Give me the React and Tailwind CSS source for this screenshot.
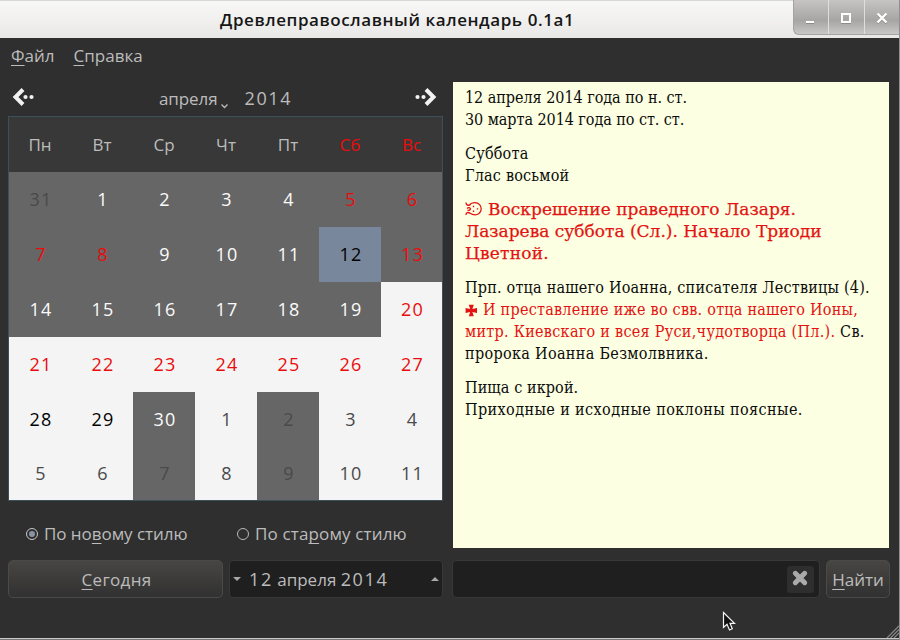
import React from 'react';

const MUTED = 'text-[#4a4a4a]';
const RED = 'text-[#ea0c0c]';
const WHITE = 'text-[#fbfbfb]';
const BLACK = 'text-black';
const G = 'bg-[#666666]';
const L = 'bg-[#f4f4f4]';
const SEL = 'bg-[#79879c]';

const dayNames = ['Пн', 'Вт', 'Ср', 'Чт', 'Пт', 'Сб', 'Вс'];

// [day, background, text colour]
const days = [
  [31, G, MUTED], [1, G, WHITE], [2, G, WHITE], [3, G, WHITE], [4, G, WHITE], [5, G, RED], [6, G, RED],
  [7, G, RED], [8, G, RED], [9, G, WHITE], [10, G, WHITE], [11, G, WHITE], [12, SEL, BLACK], [13, G, RED],
  [14, G, WHITE], [15, G, WHITE], [16, G, WHITE], [17, G, WHITE], [18, G, WHITE], [19, G, WHITE], [20, L, RED],
  [21, L, RED], [22, L, RED], [23, L, RED], [24, L, RED], [25, L, RED], [26, L, RED], [27, L, RED],
  [28, L, BLACK], [29, L, BLACK], [30, G, WHITE], [1, L, MUTED], [2, G, MUTED], [3, L, MUTED], [4, L, MUTED],
  [5, L, MUTED], [6, L, MUTED], [7, G, MUTED], [8, L, MUTED], [9, G, MUTED], [10, L, MUTED], [11, L, MUTED],
];

function Key({ children }) {
  return (
    <span className="underline decoration-1 underline-offset-[3px] [text-decoration-skip-ink:none]">{children}</span>
  );
}

function Num({ children }) {
  return <span className="text-[18px] tracking-[1.6px]">{children}</span>;
}

function TitleBar() {
  return (
    <header className="flex h-[38px] border-t border-[#d8d8d8] bg-linear-to-b from-[#f8f8f7] to-[#e9e8e7]">
      <div className="w-[793px] pl-[220px] text-[17px] leading-[37px] font-semibold tracking-[0.58px] text-[#161616]">
        Древлеправославный календарь 0.1a1
      </div>
      <div className="-mt-px flex h-[35px] w-[106px] rounded-bl-[6px] border-b border-l border-[#a3a3a3] bg-linear-to-b from-[#c6c5c4] via-[#a6a5a4] via-60% to-[#c9c8c7]">
        <div className="w-[35px] border-r border-[#dededd]">
          <svg width="34" height="34" fill="none">
            <path d="M12 23.500H20" stroke="#8c8c8c" strokeWidth="1" />
            <path d="M12 22H20" stroke="#fff" strokeWidth="2" />
          </svg>
        </div>
        <div className="w-[36px] border-r border-[#dededd]">
          <svg width="35" height="34" fill="none">
            <path d="M12 23.500H22" stroke="#8c8c8c" strokeWidth="1" />
            <rect x="13" y="14" width="8" height="8" stroke="#fff" strokeWidth="2" />
          </svg>
        </div>
        <svg width="34" height="34" fill="none">
          <path d="M12.500 14.500L21.500 23.500M21.500 14.500L12.500 23.500" stroke="#8c8c8c" strokeWidth="2" />
          <path d="M12.500 13.500L21.500 22.500M21.500 13.500L12.500 22.500" stroke="#fff" strokeWidth="2.400" />
        </svg>
      </div>
    </header>
  );
}

function Calendar() {
  return (
    <div className="h-[385px] w-[435px] border border-[#3b505a] bg-[#383838]">
      <div className="grid h-[55px] grid-cols-[repeat(6,62px)_61px] text-[#bcbcbc]">
        {dayNames.map((n, i) => (
          <div key={n} className={i > 4 ? 'text-center leading-[55px] text-[#ea0c0c]' : 'text-center leading-[55px]'}>
            {n}
          </div>
        ))}
      </div>
      <div className="grid grid-cols-[repeat(6,62px)_61px] grid-rows-[repeat(5,55px)_53px]">
        {days.map(([d, bg, fg], i) => (
          <div key={i} className={`flex items-center justify-center pl-[2px] text-[18px] tracking-[1.3px] ${bg} ${fg}`}>
            {d}
          </div>
        ))}
      </div>
    </div>
  );
}

function Reading() {
  return (
    <section className="flex h-[466px] w-[436px] flex-col gap-3 bg-[#fcffe1] pt-[5px] pl-3 font-['DejaVu_Serif_Condensed','DejaVu_Serif',serif] text-[16px] leading-[22px] whitespace-nowrap text-[#0c0c0c] [font-stretch:condensed]">
      <div>
        <p className="-tracking-[0.04px]">12 апреля 2014 года по н. ст.</p>
        <p className="-tracking-[0.06px]">30 марта 2014 года по ст. ст.</p>
      </div>
      <div>
        <p className="tracking-[0.2px]">Суббота</p>
        <p className="tracking-[0.2px]">Глас восьмой</p>
      </div>
      <div className="-mt-px mb-px font-['DejaVu_Serif',serif] text-[17px] text-[#e41212] [-webkit-text-stroke:0.25px_currentColor] [font-stretch:normal]">
        <p className="flex items-center gap-[5px] tracking-[0.03px]">
          <svg width="18" height="16" viewBox="0 0 18 16" fill="none" stroke="currentColor" strokeWidth="1.300">
            <path d="M4.500 3.800C7 1 12 .8 14.600 3.600C17 6.300 16.600 10.500 14 12.500C11.300 14.500 7.500 13.800 4.500 12" />
            <path d="M1 1.500C1 4.300 3.500 5 5.500 3.400M1 14C1 11.500 3 10.800 5 12.200M2 7.500C3.500 6.200 5 6.500 5.500 8C5 9.500 3.500 9.500 2.500 9" />
            <path d="M8.500 4.800V6.200M8.500 9.500V10.900M12.500 7.200V8.600" strokeWidth="1.400" />
          </svg>
          Воскрешение праведного Лазаря.
        </p>
        <p>Лазарева суббота (Сл.). Начало Триоди</p>
        <p className="tracking-[0.2px]">Цветной.</p>
      </div>
      <div>
        <p className="tracking-[0.21px]">Прп. отца нашего Иоанна, списателя Лествицы (4).</p>
        <p className="flex items-center gap-[5px] tracking-[0.24px] text-[#e41212]">
          <svg width="13" height="13" viewBox="0 0 13 13" fill="currentColor">
            <path d="M3.800 .8H8.800L7.400 5.100L12 3.900V9.100L7.400 7.900L8.800 12.200H3.800L5.200 7.900L.6 9.100V3.900L5.200 5.100Z" />
          </svg>
          И преставление иже во свв. отца нашего Ионы,
        </p>
        <p className="tracking-[0.28px]">
          <span className="text-[#e41212]">митр. Киевскаго и всея Руси,чудотворца (Пл.).</span> Св.
        </p>
        <p className="tracking-[0.32px]">пророка Иоанна Безмолвника.</p>
      </div>
      <div>
        <p className="tracking-[0.1px]">Пища с икрой.</p>
        <p className="tracking-[0.4px]">Приходные и исходные поклоны поясные.</p>
      </div>
    </section>
  );
}

function Chevron({ className }) {
  return (
    <svg className={className} width="22" height="20" viewBox="0 0 22 20" fill="none">
      <path d="M11 2.500L3.500 10L11 17.500" stroke="#f2f2f2" strokeWidth="4" />
      <circle cx="13.500" cy="10" r="2.100" fill="#f2f2f2" />
      <circle cx="19.500" cy="10" r="2.100" fill="#f2f2f2" />
    </svg>
  );
}

export default function App() {
  return (
    <div className="relative h-[640px] w-[900px] overflow-hidden border-r border-[#8f8f8f] bg-[#2f2f2f] font-['Open_Sans','Noto_Sans',sans-serif] text-[17px] whitespace-nowrap text-[#bcbcbc]">
      <TitleBar />
      <nav className="flex h-[36px] gap-[19px] pl-[11px] leading-[36px]">
        <span><Key>Ф</Key>айл</span>
        <span><Key>С</Key>правка</span>
      </nav>
      <main className="flex h-[486px] gap-[10px] pt-[8px] pl-2">
        <div className="w-[435px]">
          <div className="flex h-[34px] items-center">
            <Chevron className="mb-[4px] ml-[4px]" />
            <span className="ml-[125px] -tracking-[0.1px]">апреля</span>
            <svg className="mt-[14px] ml-[3px]" width="9" height="6" fill="none">
              <path d="M1.500 1.500L4.500 4.500L7.500 1.500" stroke="#bcbcbc" strokeWidth="1.300" />
            </svg>
            <span className="mb-px ml-[15px]"><Num>2014</Num></span>
            <Chevron className="mr-[6px] mb-[4px] ml-auto rotate-180" />
          </div>
          <Calendar />
          <div className="flex h-[65px] items-center">
            <span className="ml-[18px] flex size-[12px] items-center justify-center rounded-full border border-[#c4c8cc]">
              <span className="size-[6px] rounded-full bg-[#8a94a2]" />
            </span>
            <span className="ml-[6px] w-[145px] -tracking-[0.05px]">По но<Key>в</Key>ому стилю</span>
            <span className="ml-[48px] size-[12px] rounded-full border border-[#b8b8b8]" />
            <span className="ml-[6px] tracking-[0.15px]">По ста<Key>р</Key>ому стилю</span>
          </div>
        </div>
        <Reading />
      </main>
      <footer className="flex h-[38px] pl-2">
        <button className="h-[38px] w-[215px] rounded-[5px] border border-[#4a4a49] bg-linear-to-b from-[#474644] to-[#323131] pt-[2px] pl-[2px] tracking-[0.3px]">
          <Key>С</Key>егодня
        </button>
        <div className="ml-[6px] flex h-[38px] w-[214px] items-center rounded-[4px] border border-[#383838] bg-[#1f1f1f]">
          <svg className="ml-[3px]" width="8" height="5"><path d="M0 0H8L4 4Z" fill="#a8a8a8" /></svg>
          <span className="ml-[8px]"><Num>12</Num> апреля <Num>2014</Num></span>
          <svg className="mr-[3px] ml-auto" width="8" height="5"><path d="M0 4H8L4 0Z" fill="#a8a8a8" /></svg>
        </div>
        <div className="ml-[9px] flex h-[38px] w-[368px] items-center justify-end rounded-[4px] border border-[#383838] bg-[#1f1f1f] pr-[5px]">
          <span className="flex size-[27px] items-center justify-center rounded-[3px] bg-[#2e2e2e] pr-px pb-[2px]">
            <svg width="18" height="18" viewBox="0 0 18 18">
              <path d="M4.300 4.300L13.700 13.700M13.700 4.300L4.300 13.700" stroke="#aaaaaa" strokeWidth="5" strokeLinecap="round" />
            </svg>
          </span>
        </div>
        <button className="ml-[6px] h-[38px] w-[64px] rounded-[5px] border border-[#4a4a49] bg-linear-to-b from-[#474644] to-[#323131] pt-[2px]">
          <Key>Н</Key>айти
        </button>
      </footer>
      <div className="mt-[40px] h-[2px] border-t border-[#c9c9c9] bg-[#777777]" />
      <svg className="absolute right-0 bottom-[2px]" width="13" height="13" fill="none">
        <path d="M1 13L13 1M4.500 13L13 4.500M8 13L13 8" stroke="#8a8a8a" strokeWidth="1.200" />
      </svg>
      <svg className="absolute top-[611px] left-[722px]" width="14" height="21" viewBox="0 0 14 21">
        <path d="M1.500 1.500V16.500L5 13.300L7.500 19L10.300 17.800L8 12.300H12.500Z" fill="#111" stroke="#f4f4f4" strokeWidth="1.200" />
      </svg>
    </div>
  );
}
